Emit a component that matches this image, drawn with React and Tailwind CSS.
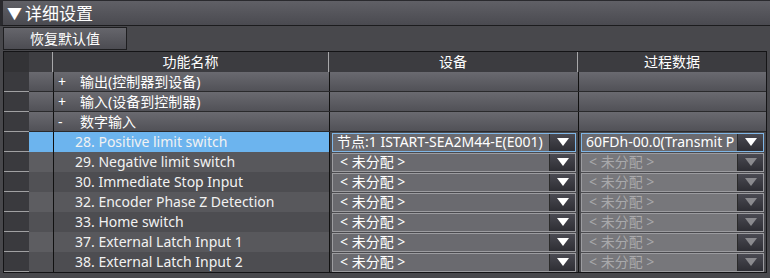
import React from "react";

const font = { fontFamily: '"Noto Sans", "Noto Sans CJK SC", sans-serif' };

const groups = [
  { sign: "+", label: "输出(控制器到设备)" },
  { sign: "+", label: "输入(设备到控制器)" },
  { sign: "-", label: "数字输入" },
];

const items = [
  { name: "28. Positive limit switch", device: "节点:1 ISTART-SEA2M44-E(E001)", pdo: "60FDh-00.0(Transmit P", active: true },
  { name: "29. Negative limit switch" },
  { name: "30. Immediate Stop Input" },
  { name: "32. Encoder Phase Z Detection" },
  { name: "33. Home switch" },
  { name: "37. External Latch Input 1" },
  { name: "38. External Latch Input 2" },
];

function Arrow({ disabled }) {
  return (
    <div className="w-[26px] h-full flex items-center justify-center bg-gradient-to-b from-[#4a4a52] to-[#2e2e34] border-l border-[#2a2a2a]">
      <svg width="12" height="8" viewBox="0 0 12 8">
        <path d="M0 0 L12 0 L6 8 Z" fill={disabled ? "#8a8a8e" : "#ffffff"} />
      </svg>
    </div>
  );
}

function Combo({ text, disabled, active }) {
  return (
    <div
      className={`h-[19px] flex items-stretch border ${
        active ? "border-[#7fb6e6]" : "border-[#9c9ca0]"
      } ${disabled ? "bg-[#77777b]" : "bg-[#6a6a6f]"}`}
    >
      <div
        className={`flex-1 flex items-center overflow-hidden whitespace-nowrap text-[14px] leading-none ${
          disabled ? "text-[#a9a9ab]" : "text-white"
        } ${active ? "pl-[4px]" : "pl-[7px]"}`}
      >
        {text}
      </div>
      <Arrow disabled={disabled} />
    </div>
  );
}

export default function App() {
  return (
    <div className="w-[770px] h-[278px] bg-[#48484c] overflow-hidden" style={font}>
      {/* title bar */}
      <div className="h-[26px] flex items-center pl-[4px] bg-gradient-to-b from-[#606066] to-[#4a4a50] border-t border-[#2a2a2e] border-b border-b-[#1c1c1e] border-l-[3px] border-l-[#2a2a2e] text-white text-[17px] leading-none">
        <span className="text-[15px] mr-[3px]">▼</span>详细设置
      </div>

      {/* toolbar */}
      <div className="h-[25px] pl-[3px] pt-px flex items-start">
        <button className="w-[124px] h-[23px] flex items-center justify-center bg-gradient-to-b from-[#66666c] to-[#4c4c52] border border-[#1e1e20] text-white text-[14px] leading-none">
          恢复默认值
        </button>
      </div>

      {/* table */}
      <div className="ml-[3px] w-[764px] border-l border-t border-b border-r border-[#141416]">
        {/* header */}
        <div className="h-[20px] flex bg-[#3c3c40] text-white text-[14px] leading-none">
          <div className="w-[25px] bg-[#333336]" />
          <div className="w-[24px] bg-[#3e3e42] border-r border-[#a8a8aa]" />
          <div className="w-[276px] flex items-center justify-center border-r border-[#a8a8aa]">功能名称</div>
          <div className="w-[249px] flex items-center justify-center border-r border-[#a8a8aa]">设备</div>
          <div className="flex-1 flex items-center justify-center">过程数据</div>
        </div>

        {groups.map((g) => (
          <div key={g.label} className="h-[20px] flex text-white text-[14px] leading-none">
            <div className="w-[25px] bg-[#3a3a3e] border-b border-[#a0a0a2]" />
            <div className="w-[24px] bg-gradient-to-b from-[#6a6a70] to-[#515157] border-b border-[#2a2a2c]" />
            <div className="flex-1 flex bg-gradient-to-b from-[#6a6a70] to-[#515157] border-l border-[#111] border-b border-b-[#2a2a2c]">
              <div className="w-[276px] flex items-center pl-[4px] border-r border-[#111]">
                <span className="w-[22px]">{g.sign}</span>
                {g.label}
              </div>
              <div className="w-[249px] border-r border-[#111]" />
              <div className="flex-1" />
            </div>
          </div>
        ))}

        {items.map((it, i) => {
          const bg = it.active ? "bg-[#6cb4ee]" : i % 2 === 1 ? "bg-[#58585c]" : "bg-[#4d4d51]";
          const bg2 = it.active ? "bg-[#6cb4ee]" : i % 2 === 1 ? "bg-[#5d5d61]" : "bg-[#515155]";
          return (
            <div key={it.name} className="h-[20px] flex text-[14px] leading-none">
              <div className="w-[25px] bg-[#3a3a3e] border-b border-[#a0a0a2]" />
              <div className={`w-[24px] ${bg2}`} />
              <div className={`w-[276px] flex items-center pl-[21px] border-l border-[#111] text-[#f2f2f2] whitespace-nowrap overflow-hidden ${bg}`}>
                {it.name}
              </div>
              <div className="w-[249px] flex flex-col justify-center px-[2px] bg-[#4a4a4e] border-l border-[#111]">
                <Combo text={it.device || "< 未分配 >"} active={it.active} />
              </div>
              <div className="flex-1 flex flex-col justify-center px-[2px] bg-[#4a4a4e] border-l border-[#111]">
                <Combo text={it.pdo || "< 未分配 >"} active={it.active} disabled={!it.active} />
              </div>
            </div>
          );
        })}
      </div>
    </div>
  );
}
